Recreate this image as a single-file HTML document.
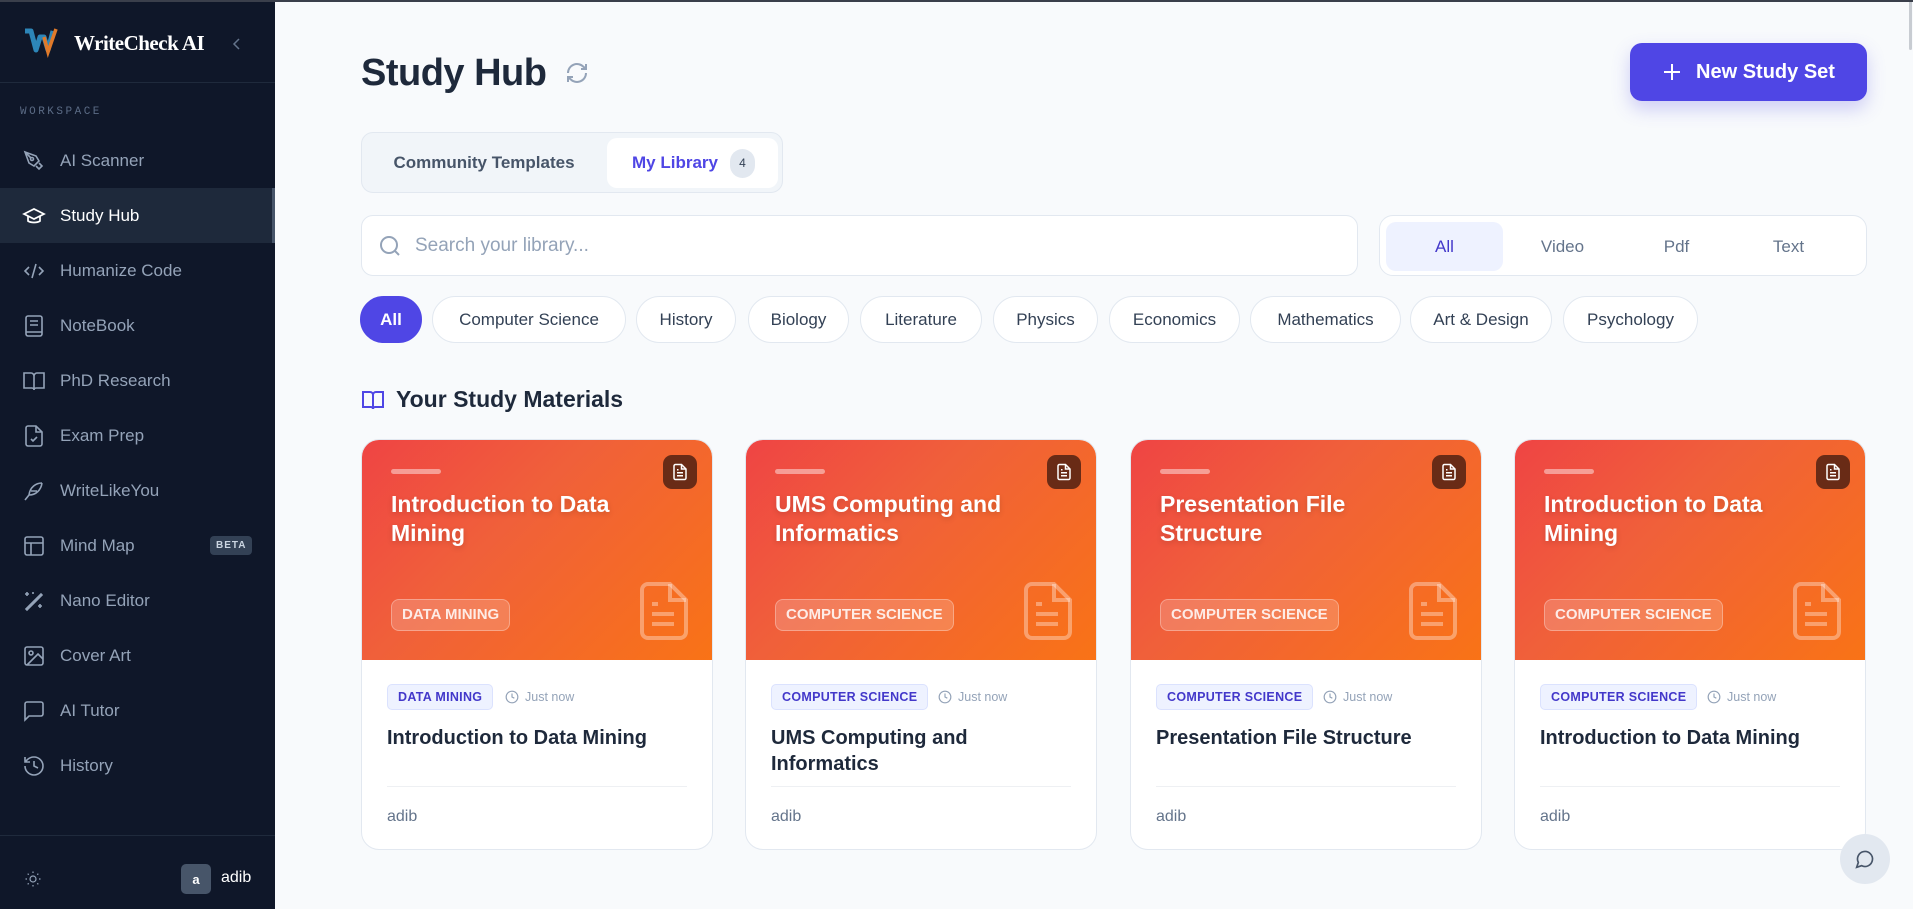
<!DOCTYPE html>
<html><head><meta charset="utf-8"><style>
*{box-sizing:border-box;margin:0;padding:0}
body{width:1913px;height:909px;overflow:hidden;background:#f8fafc;font-family:"Liberation Sans",sans-serif;position:relative;color:#0f172a}
.sb{position:absolute;left:0;top:0;width:275px;height:909px;background:#0f1729;border-top:2px solid #3a3f4b}
.logo{position:absolute;left:24px;top:26px;display:flex;align-items:center}
.logo span{font-family:"Liberation Serif",serif;font-weight:bold;color:#fff;font-size:21px;margin-left:14px;letter-spacing:-0.5px}
.hr{position:absolute;left:0;width:275px;height:1px;background:#1f2a3c}
.ws{position:absolute;left:20px;top:104px;font-size:11px;letter-spacing:2.5px;color:#5b6b85;font-family:"Liberation Mono",monospace}
.nav{position:absolute;left:0;width:275px;height:55px;display:flex;align-items:center;color:#94a3b8;font-size:17px}
.nav svg{position:absolute;left:22px}
.nav .t{position:absolute;left:60px}
.nav.act{background:#1e293b;color:#fff}
.nav.act:after{content:"";position:absolute;right:0;top:0;width:3px;height:55px;background:#475569}
.beta{position:absolute;left:210px;background:#334155;color:#cbd5e1;font-size:10px;font-weight:bold;padding:4px 6px;border-radius:4px;letter-spacing:1px}
h1{position:absolute;left:361px;top:52px;font-size:38px;font-weight:bold;color:#1e293b;letter-spacing:-0.5px}
.btn{position:absolute;left:1630px;top:43px;width:237px;height:58px;background:#4f46e5;border-radius:12px;color:#fff;font-weight:bold;font-size:20px;display:flex;align-items:center;justify-content:center;box-shadow:0 8px 18px rgba(79,70,229,.25)}
.tabs{position:absolute;left:361px;top:132px;width:422px;height:61px;background:#f1f5f9;border:1px solid #e2e8f0;border-radius:12px}
.tabs .a{position:absolute;left:12px;top:0;height:59px;line-height:59px;font-size:17px;font-weight:bold;color:#475569;width:220px;text-align:center}
.tabs .b{position:absolute;left:245px;top:5px;width:171px;height:50px;background:#fff;border-radius:10px;font-size:17px;font-weight:bold;color:#4f46e5;display:flex;align-items:center;padding-left:25px}
.cnt{margin-left:12px;width:25px;height:29px;border-radius:13px;background:#e2e8f0;color:#334155;font-size:12px;display:flex;align-items:center;justify-content:center;font-weight:normal}
.search{position:absolute;left:361px;top:215px;width:997px;height:61px;background:#fff;border:1px solid #e2e8f0;border-radius:12px;display:flex;align-items:center;padding-left:16px;color:#94a3b8;font-size:19px}
.filt{position:absolute;left:1379px;top:215px;width:488px;height:61px;background:#fff;border:1px solid #e2e8f0;border-radius:14px}
.filt div{position:absolute;top:6px;width:117px;height:49px;line-height:49px;text-align:center;font-size:17px;color:#64748b}
.chip{position:absolute;top:296px;height:47px;border:1px solid #e2e8f0;background:#fff;border-radius:24px;font-size:17px;color:#334155;display:flex;align-items:center;justify-content:center}
.chip.on{background:#4f46e5;color:#fff;border-color:#4f46e5;font-weight:bold}
.sec{position:absolute;left:361px;top:386px;display:flex;align-items:center;font-size:23px;font-weight:bold;color:#1e293b}
.card{position:absolute;top:439px;width:352px;height:411px;background:#fff;border:1px solid #e2e8f0;border-radius:18px;overflow:hidden}
.hd{position:absolute;left:0;top:0;width:352px;height:220px;background:linear-gradient(135deg,#ef4444 0%,#f0603a 40%,#f97316 100%)}
.bar{position:absolute;left:29px;top:29px;width:50px;height:5px;border-radius:3px;background:rgba(255,255,255,.45)}
.ib{position:absolute;left:301px;top:15px;width:34px;height:34px;border-radius:9px;background:#692b16;display:flex;align-items:center;justify-content:center}
.ht{position:absolute;left:29px;top:50px;width:280px;font-size:23px;font-weight:bold;color:#fff;line-height:29px;text-shadow:0 2px 6px rgba(0,0,0,.15)}
.tg{position:absolute;left:29px;top:159px;height:32px;padding:0 10px;border:1px solid rgba(255,255,255,.3);background:rgba(255,255,255,.18);border-radius:8px;color:rgba(255,255,255,.85);font-weight:bold;font-size:15px;line-height:30px}
.big{position:absolute;left:278px;top:142px}
.bd{position:absolute;left:25px;top:244px;height:26px;padding:0 10px;background:#eef2ff;border:1px solid #dbe2fe;border-radius:5px;color:#4338ca;font-size:12.5px;font-weight:bold;line-height:24px;letter-spacing:.3px}
.tm{position:absolute;top:244px;height:26px;display:flex;align-items:center;color:#94a3b8;font-size:12.5px}
.ct{position:absolute;left:25px;top:285px;width:300px;font-size:20px;font-weight:bold;color:#1e293b;line-height:26px}
.dv{position:absolute;left:25px;right:25px;top:346px;height:1px;background:#eef0f3}
.au{position:absolute;left:25px;top:368px;font-size:16px;color:#64748b}
</style></head><body>
<div class="sb">
 <div class="logo">
  <svg width="36" height="30" viewBox="0 0 36 30"><path d="M1 3 L7 3 L12 22 L16 9 L20 9 L24 22 L29 3" fill="none" stroke="#2d86b8" stroke-width="5" stroke-linejoin="round"/><path d="M20 9 L24 24 L32 1" fill="none" stroke="#e07a2a" stroke-width="3.5"/></svg>
  <span>WriteCheck AI</span>
 </div>
 <svg style="position:absolute;left:232px;top:35px" width="10" height="14" viewBox="0 0 10 14"><path d="M7 2 L2 7 L7 12" fill="none" stroke="#64748b" stroke-width="1.5"/></svg>
 <div class="hr" style="top:80px"></div>
 <div class="ws">WORKSPACE</div>
 <div class="nav" style="top:131px"><svg width="24" height="24" viewBox="0 0 24 24" fill="none" stroke="#94a3b8" stroke-width="1.6"><path d="M3 3l11 4 3 5-5 5-5-3z"/><circle cx="10" cy="10" r="1.5"/><path d="M3 3l6 6M14 17l3 3 3-3-3-3"/></svg><span class="t">AI Scanner</span></div>
 <div class="nav act" style="top:186px"><svg width="24" height="24" viewBox="0 0 24 24" fill="none" stroke="#fff" stroke-width="1.7"><path d="M2 10l10-5 10 5-10 5z"/><path d="M6 12v5c3 2 9 2 12 0v-5"/></svg><span class="t">Study Hub</span></div>
 <div class="nav" style="top:241px"><svg width="24" height="24" viewBox="0 0 24 24" fill="none" stroke="#94a3b8" stroke-width="1.6"><path d="M7 8l-4 4 4 4M17 8l4 4-4 4M14 5l-4 14"/></svg><span class="t">Humanize Code</span></div>
 <div class="nav" style="top:296px"><svg width="24" height="24" viewBox="0 0 24 24" fill="none" stroke="#94a3b8" stroke-width="1.6"><rect x="4" y="2" width="16" height="20" rx="2"/><path d="M8 7h8M8 11h8M4 18h16"/></svg><span class="t">NoteBook</span></div>
 <div class="nav" style="top:351px"><svg width="24" height="24" viewBox="0 0 24 24" fill="none" stroke="#94a3b8" stroke-width="1.6"><path d="M2 4h7a3 3 0 013 3v14a2 2 0 00-2-2H2zM22 4h-7a3 3 0 00-3 3v14a2 2 0 012-2h8z"/></svg><span class="t">PhD Research</span></div>
 <div class="nav" style="top:406px"><svg width="24" height="24" viewBox="0 0 24 24" fill="none" stroke="#94a3b8" stroke-width="1.6"><path d="M14 2H6a2 2 0 00-2 2v16a2 2 0 002 2h12a2 2 0 002-2V8z"/><path d="M14 2v6h6M9 15l2 2 4-4"/></svg><span class="t">Exam Prep</span></div>
 <div class="nav" style="top:461px"><svg width="24" height="24" viewBox="0 0 24 24" fill="none" stroke="#94a3b8" stroke-width="1.6"><path d="M20 4c-6 0-12 4-13 12l-4 5M7 16c7 0 12-5 13-12M9 12h6"/></svg><span class="t">WriteLikeYou</span></div>
 <div class="nav" style="top:516px"><svg width="24" height="24" viewBox="0 0 24 24" fill="none" stroke="#94a3b8" stroke-width="1.6"><rect x="3" y="3" width="18" height="18" rx="2"/><path d="M3 9h18M9 9v12"/></svg><span class="t">Mind Map</span><span class="beta">BETA</span></div>
 <div class="nav" style="top:571px"><svg width="24" height="24" viewBox="0 0 24 24" fill="none" stroke="#94a3b8" stroke-width="1.6"><path d="M4 20L19 5l1 1L5 21zM5 3v4M3 5h4M18 15v4M16 17h4M11 3v2"/></svg><span class="t">Nano Editor</span></div>
 <div class="nav" style="top:626px"><svg width="24" height="24" viewBox="0 0 24 24" fill="none" stroke="#94a3b8" stroke-width="1.6"><rect x="3" y="3" width="18" height="18" rx="2"/><circle cx="9" cy="9" r="2"/><path d="M21 15l-5-5L5 21"/></svg><span class="t">Cover Art</span></div>
 <div class="nav" style="top:681px"><svg width="24" height="24" viewBox="0 0 24 24" fill="none" stroke="#94a3b8" stroke-width="1.6"><path d="M21 15a2 2 0 01-2 2H7l-4 4V5a2 2 0 012-2h14a2 2 0 012 2z"/></svg><span class="t">AI Tutor</span></div>
 <div class="nav" style="top:736px"><svg width="24" height="24" viewBox="0 0 24 24" fill="none" stroke="#94a3b8" stroke-width="1.6"><path d="M3 12a9 9 0 109-9 9.7 9.7 0 00-6.7 2.7L3 8M3 3v5h5M12 7v5l4 2"/></svg><span class="t">History</span></div>
 <div class="hr" style="top:833px"></div>
 <svg style="position:absolute;left:24px;top:868px" width="18" height="18" viewBox="0 0 24 24" fill="none" stroke="#94a3b8" stroke-width="1.6"><circle cx="12" cy="12" r="4"/><path d="M12 2v2M12 20v2M4.9 4.9l1.4 1.4M17.7 17.7l1.4 1.4M2 12h2M20 12h2M4.9 19.1l1.4-1.4M17.7 6.3l1.4-1.4"/></svg>
 <div style="position:absolute;left:181px;top:862px;width:30px;height:30px;border-radius:5px;background:#475569;color:#fff;font-size:13px;font-weight:bold;display:flex;align-items:center;justify-content:center">a</div>
 <div style="position:absolute;left:221px;top:867px;color:#fff;font-size:16px">adib</div>
</div>

<h1>Study Hub</h1>
<svg style="position:absolute;left:565px;top:61px" width="24" height="24" viewBox="0 0 24 24" fill="none" stroke="#94a3b8" stroke-width="2"><path d="M21 12a9 9 0 01-15.5 6.2L3 16M3 12a9 9 0 0115.5-6.2L21 8M21 3v5h-5M3 21v-5h5"/></svg>
<div class="btn"><svg width="20" height="20" viewBox="0 0 20 20" style="margin-right:14px"><path d="M10 2v16M2 10h16" stroke="#fff" stroke-width="2"/></svg>New Study Set</div>

<div class="tabs"><div class="a">Community Templates</div><div class="b">My Library<span class="cnt">4</span></div></div>
<div class="search"><svg width="24" height="24" viewBox="0 0 24 24" fill="none" stroke="#94a3b8" stroke-width="2" style="margin-right:13px"><circle cx="11" cy="11" r="8"/><path d="M21 21l-4.3-4.3"/></svg>Search your library...</div>
<div class="filt"><div style="left:6px;background:#eef2ff;border-radius:10px;color:#4338ca">All</div><div style="left:124px">Video</div><div style="left:238px">Pdf</div><div style="left:350px">Text</div></div>

<div class="chip on" style="left:360px;width:62px">All</div>
<div class="chip" style="left:432px;width:194px">Computer Science</div>
<div class="chip" style="left:636px;width:100px">History</div>
<div class="chip" style="left:748px;width:101px">Biology</div>
<div class="chip" style="left:860px;width:122px">Literature</div>
<div class="chip" style="left:993px;width:105px">Physics</div>
<div class="chip" style="left:1109px;width:131px">Economics</div>
<div class="chip" style="left:1250px;width:151px">Mathematics</div>
<div class="chip" style="left:1410px;width:142px">Art &amp; Design</div>
<div class="chip" style="left:1563px;width:135px">Psychology</div>

<div class="sec"><svg width="24" height="24" viewBox="0 0 24 24" fill="none" stroke="#4f46e5" stroke-width="2" style="margin-right:11px"><path d="M2 4h7a3 3 0 013 3v14a2 2 0 00-2-2H2zM22 4h-7a3 3 0 00-3 3v14a2 2 0 012-2h8z"/></svg>Your Study Materials</div>

<div class="card" style="left:361px"><div class="hd"><div class="bar"></div><div class="ib"><svg width="18" height="18" viewBox="0 0 24 24" fill="none" stroke="#fff" stroke-width="2"><path d="M14 2H6a2 2 0 00-2 2v16a2 2 0 002 2h12a2 2 0 002-2V8z"/><path d="M14 2v6h6M8 13h8M8 17h8M8 9h2"/></svg></div><div class="ht">Introduction to Data Mining</div><div class="tg">DATA MINING</div><svg class="big" width="48" height="58" viewBox="0 0 48 58" fill="none" stroke="rgba(255,255,255,.35)" stroke-width="4"><path d="M30 2H8a6 6 0 00-6 6v42a6 6 0 006 6h32a6 6 0 006-6V18z"/><path d="M30 2v16h16M12 22h6M12 32h22M12 42h22"/></svg></div>
<div class="bd">DATA MINING</div><div class="tm" style="left:143px"><svg width="14" height="14" viewBox="0 0 24 24" fill="none" stroke="#94a3b8" stroke-width="2" style="margin-right:6px"><circle cx="12" cy="12" r="10"/><path d="M12 6v6l4 2"/></svg>Just now</div>
<div class="ct">Introduction to Data Mining</div><div class="dv"></div><div class="au">adib</div></div>

<div class="card" style="left:745px"><div class="hd"><div class="bar"></div><div class="ib"><svg width="18" height="18" viewBox="0 0 24 24" fill="none" stroke="#fff" stroke-width="2"><path d="M14 2H6a2 2 0 00-2 2v16a2 2 0 002 2h12a2 2 0 002-2V8z"/><path d="M14 2v6h6M8 13h8M8 17h8M8 9h2"/></svg></div><div class="ht">UMS Computing and Informatics</div><div class="tg">COMPUTER SCIENCE</div><svg class="big" width="48" height="58" viewBox="0 0 48 58" fill="none" stroke="rgba(255,255,255,.35)" stroke-width="4"><path d="M30 2H8a6 6 0 00-6 6v42a6 6 0 006 6h32a6 6 0 006-6V18z"/><path d="M30 2v16h16M12 22h6M12 32h22M12 42h22"/></svg></div>
<div class="bd">COMPUTER SCIENCE</div><div class="tm" style="left:192px"><svg width="14" height="14" viewBox="0 0 24 24" fill="none" stroke="#94a3b8" stroke-width="2" style="margin-right:6px"><circle cx="12" cy="12" r="10"/><path d="M12 6v6l4 2"/></svg>Just now</div>
<div class="ct">UMS Computing and Informatics</div><div class="dv"></div><div class="au">adib</div></div>

<div class="card" style="left:1130px"><div class="hd"><div class="bar"></div><div class="ib"><svg width="18" height="18" viewBox="0 0 24 24" fill="none" stroke="#fff" stroke-width="2"><path d="M14 2H6a2 2 0 00-2 2v16a2 2 0 002 2h12a2 2 0 002-2V8z"/><path d="M14 2v6h6M8 13h8M8 17h8M8 9h2"/></svg></div><div class="ht">Presentation File Structure</div><div class="tg">COMPUTER SCIENCE</div><svg class="big" width="48" height="58" viewBox="0 0 48 58" fill="none" stroke="rgba(255,255,255,.35)" stroke-width="4"><path d="M30 2H8a6 6 0 00-6 6v42a6 6 0 006 6h32a6 6 0 006-6V18z"/><path d="M30 2v16h16M12 22h6M12 32h22M12 42h22"/></svg></div>
<div class="bd">COMPUTER SCIENCE</div><div class="tm" style="left:192px"><svg width="14" height="14" viewBox="0 0 24 24" fill="none" stroke="#94a3b8" stroke-width="2" style="margin-right:6px"><circle cx="12" cy="12" r="10"/><path d="M12 6v6l4 2"/></svg>Just now</div>
<div class="ct">Presentation File Structure</div><div class="dv"></div><div class="au">adib</div></div>

<div class="card" style="left:1514px"><div class="hd"><div class="bar"></div><div class="ib"><svg width="18" height="18" viewBox="0 0 24 24" fill="none" stroke="#fff" stroke-width="2"><path d="M14 2H6a2 2 0 00-2 2v16a2 2 0 002 2h12a2 2 0 002-2V8z"/><path d="M14 2v6h6M8 13h8M8 17h8M8 9h2"/></svg></div><div class="ht">Introduction to Data Mining</div><div class="tg">COMPUTER SCIENCE</div><svg class="big" width="48" height="58" viewBox="0 0 48 58" fill="none" stroke="rgba(255,255,255,.35)" stroke-width="4"><path d="M30 2H8a6 6 0 00-6 6v42a6 6 0 006 6h32a6 6 0 006-6V18z"/><path d="M30 2v16h16M12 22h6M12 32h22M12 42h22"/></svg></div>
<div class="bd">COMPUTER SCIENCE</div><div class="tm" style="left:192px"><svg width="14" height="14" viewBox="0 0 24 24" fill="none" stroke="#94a3b8" stroke-width="2" style="margin-right:6px"><circle cx="12" cy="12" r="10"/><path d="M12 6v6l4 2"/></svg>Just now</div>
<div class="ct">Introduction to Data Mining</div><div class="dv"></div><div class="au">adib</div></div>

<div style="position:absolute;left:1840px;top:834px;width:50px;height:50px;border-radius:25px;background:#e2e8f0;display:flex;align-items:center;justify-content:center"><svg width="20" height="20" viewBox="0 0 24 24" fill="none" stroke="#475569" stroke-width="2"><path d="M7.9 20A9 9 0 1 0 4 16.1L2 22z"/></svg></div>
<div style="position:absolute;left:1909px;top:0;width:3px;height:50px;background:#c8ccd2;border-radius:2px"></div>
<div style="position:absolute;left:0;top:0;width:1913px;height:2px;background:#3a3f4b"></div>
</body></html>
